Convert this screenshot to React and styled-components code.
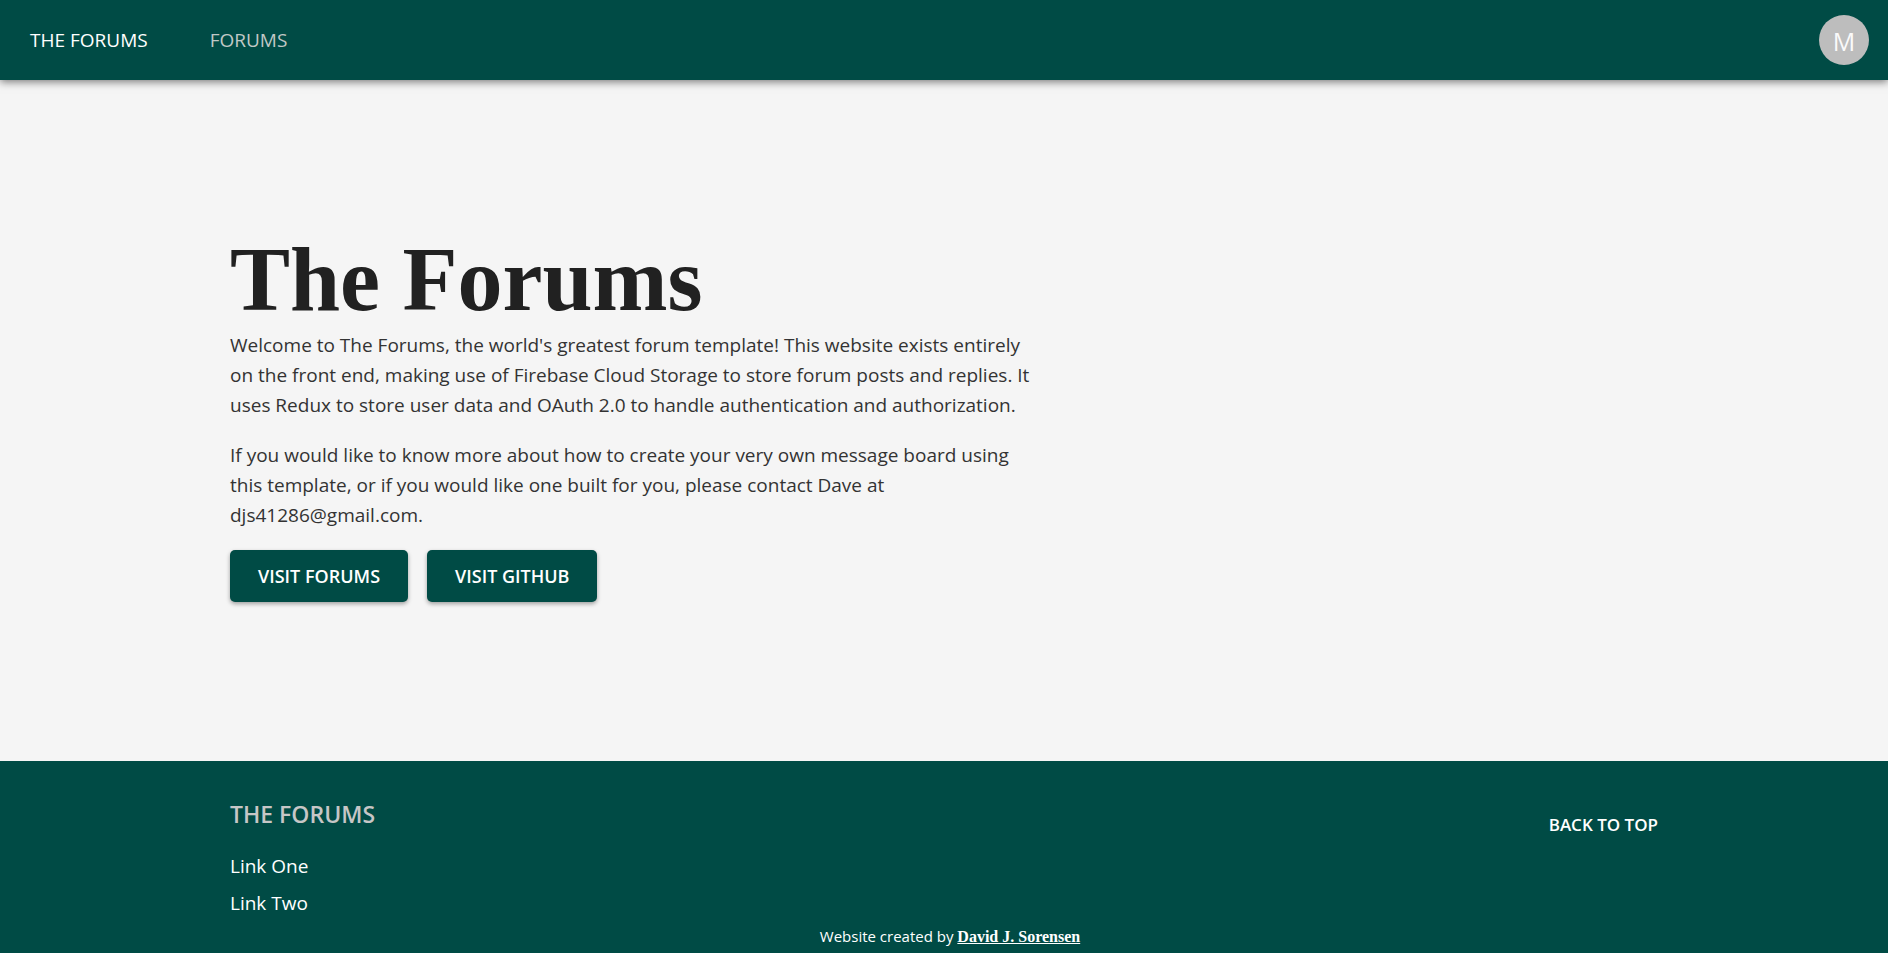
import React from "react";
import styled, { createGlobalStyle } from "styled-components";

const green = "#004b45";
const sans = '"Segoe UI", "Open Sans", "Noto Sans", sans-serif';
const serif = '"Liberation Serif", serif';

const GlobalStyle = createGlobalStyle`
  *, *::before, *::after { box-sizing: border-box; }
  body {
    margin: 0;
    background: #f5f5f5;
    color: #212121;
    font-family: ${sans};
  }
`;

const Page = styled.div`
  display: flex;
  flex-direction: column;
  min-height: 100vh;
`;

const Header = styled.header`
  display: flex;
  align-items: center;
  justify-content: space-between;
  height: 80px;
  padding: 0 19px 0 30px;
  background: ${green};
  box-shadow: 0 2px 8px rgba(0, 0, 0, 0.5);
`;

const Nav = styled.nav`
  display: flex;
  gap: 62px;
`;

const NavLink = styled.a`
  color: ${({ $active }) => ($active ? "#fff" : "#c0c8c6")};
  font-size: 19px;
  line-height: 28px;
  text-decoration: none;
  text-transform: uppercase;
`;

const Avatar = styled.button`
  display: flex;
  align-items: center;
  justify-content: center;
  width: 50px;
  height: 50px;
  padding: 2px 0 0;
  border: 0;
  border-radius: 50%;
  background: #bdbdbd;
  color: #fafafa;
  font-family: inherit;
  font-size: 25px;
  line-height: 28px;
`;

const Main = styled.main`
  display: flex;
  flex: 1;
  align-items: center;
  padding: 40px 0;
`;

const Container = styled.div`
  width: 100%;
  max-width: 1428px;
  margin: 0 auto;
`;

const Intro = styled.section`
  max-width: 800px;
`;

const Title = styled.h1`
  margin: 0 0 10px;
  font-family: ${serif};
  font-size: 90px;
  font-weight: 700;
  line-height: 81px;
`;

const Paragraph = styled.p`
  margin: 0 0 20px;
  color: #333;
  font-size: 19px;
  line-height: 30px;
`;

const Actions = styled.div`
  display: flex;
  gap: 19px;
`;

const ActionButton = styled.button`
  height: 52px;
  padding: 0 28px;
  border: 0;
  border-radius: 5px;
  background: ${green};
  box-shadow: 0 2px 4px rgba(0, 0, 0, 0.35);
  color: #fff;
  font-family: inherit;
  font-size: 18px;
  font-weight: 600;
  text-transform: uppercase;
`;

const Footer = styled.footer`
  padding: 36px 0 4px;
  background: ${green};
  color: #fff;
`;

const FooterTop = styled(Container)`
  display: flex;
  align-items: flex-start;
  justify-content: space-between;
`;

const FooterTitle = styled.h2`
  margin: 0 0 17px;
  color: #c6c6c6;
  font-size: 23px;
  font-weight: 600;
  line-height: 34px;
  text-transform: uppercase;
`;

const FooterLinks = styled.ul`
  margin: 0;
  padding: 0;
  list-style: none;
`;

const FooterLink = styled.a`
  display: block;
  color: #fff;
  font-size: 19px;
  line-height: 37px;
  text-decoration: none;
`;

const BackToTop = styled.button`
  margin-top: 16px;
  padding: 0;
  border: 0;
  background: none;
  color: #fff;
  font-family: inherit;
  font-size: 17px;
  font-weight: 600;
  line-height: 24px;
  text-transform: uppercase;
`;

const Credit = styled.p`
  margin: 2px 0 0;
  padding-left: 12px;
  font-size: 15px;
  line-height: 24px;
  text-align: center;
`;

const CreditLink = styled.a`
  color: #fff;
  font-family: ${serif};
  font-size: 16px;
  font-weight: 700;
`;

export default function App() {
  return (
    <Page>
      <GlobalStyle />
      <Header>
        <Nav aria-label="Main">
          <NavLink href="#home" $active>The Forums</NavLink>
          <NavLink href="#forums">Forums</NavLink>
        </Nav>
        <Avatar type="button">M</Avatar>
      </Header>
      <Main>
        <Container>
          <Intro>
            <Title>The Forums</Title>
            <Paragraph>
              Welcome to The Forums, the world's greatest forum template! This website exists entirely on the
              front end, making use of Firebase Cloud Storage to store forum posts and replies. It uses Redux to
              store user data and OAuth 2.0 to handle authentication and authorization.
            </Paragraph>
            <Paragraph>
              If you would like to know more about how to create your very own message board using this template,
              or if you would like one built for you, please contact Dave at djs41286@gmail.com.
            </Paragraph>
            <Actions>
              <ActionButton type="button">Visit Forums</ActionButton>
              <ActionButton type="button">Visit GitHub</ActionButton>
            </Actions>
          </Intro>
        </Container>
      </Main>
      <Footer>
        <FooterTop>
          <div>
            <FooterTitle>The Forums</FooterTitle>
            <FooterLinks>
              <li><FooterLink href="#one">Link One</FooterLink></li>
              <li><FooterLink href="#two">Link Two</FooterLink></li>
            </FooterLinks>
          </div>
          <BackToTop type="button">Back to top</BackToTop>
        </FooterTop>
        <Credit>
          Website created by <CreditLink href="#author">David J. Sorensen</CreditLink>
        </Credit>
      </Footer>
    </Page>
  );
}
